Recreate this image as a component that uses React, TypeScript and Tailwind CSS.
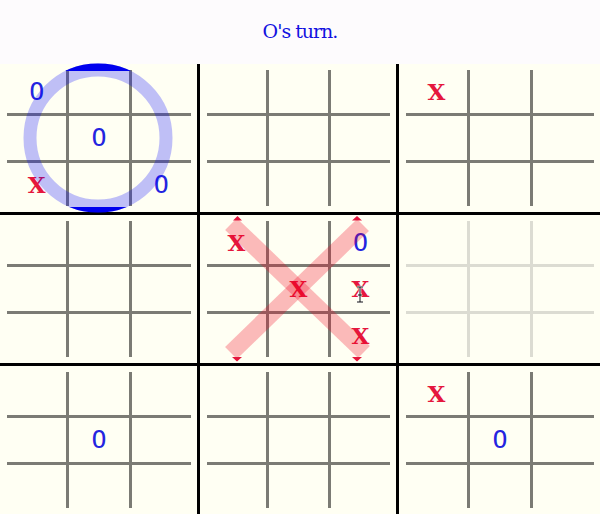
import React from 'react';

type Mark = 'X' | 'O' | '';

const boards: Mark[][] = [
  ['O', '', '', '', 'O', '', 'X', '', 'O'],
  ['', '', '', '', '', '', '', '', ''],
  ['X', '', '', '', '', '', '', '', ''],
  ['', '', '', '', '', '', '', '', ''],
  ['X', '', 'O', '', 'X', 'X', '', '', 'X'],
  ['', '', '', '', '', '', '', '', ''],
  ['', '', '', '', 'O', '', '', '', ''],
  ['', '', '', '', '', '', '', '', ''],
  ['X', '', '', '', 'O', '', '', '', ''],
];

function Cell({ mark }: { mark: Mark }) {
  return (
    <div className="bg-[#fffff3] flex items-center justify-center font-['DejaVu_Serif',serif] text-[23px] leading-none">
      {mark === 'X' && <span className="text-[#e5173d] font-bold">X</span>}
      {mark === 'O' && <span className="text-[#2424e0] [font-family:'DejaVu_Sans_Mono',monospace] text-[25px]">O</span>}
    </div>
  );
}

function CircleOverlay() {
  return (
    <svg className="absolute inset-0 pointer-events-none overflow-visible" width="197" height="148">
      <defs>
        <clipPath id="ringEdge">
          <rect x="0" y="-10" width="197" height="17" />
          <rect x="0" y="143" width="197" height="20" />
        </clipPath>
      </defs>
      <circle cx="98" cy="74" r="68" fill="none" stroke="rgba(0,0,255,0.25)" strokeWidth="13" />
      <circle cx="98" cy="74" r="68" fill="none" stroke="#0000ee" strokeWidth="13" clipPath="url(#ringEdge)" />
    </svg>
  );
}

function CrossOverlay() {
  return (
    <svg className="absolute inset-0 pointer-events-none overflow-visible" width="196" height="148">
      <line x1="31" y1="9" x2="164" y2="137" stroke="rgba(240,0,30,0.27)" strokeWidth="17" />
      <line x1="163" y1="10" x2="31" y2="138" stroke="rgba(240,0,30,0.27)" strokeWidth="17" />
      <polygon points="33,5.5 42,5.5 37.5,1" fill="#e5173d" />
      <polygon points="152,5.5 162,5.5 157,1" fill="#e5173d" />
      <polygon points="32,142 42,142 37,146.5" fill="#e5173d" />
      <polygon points="152,142 162,142 157,146.5" fill="#e5173d" />
      {/* mouse I-beam */}
      <path d="M157 72 h6 M160 72 v15 M157 87 h6 M158 80 h4" stroke="#fff" strokeWidth="2.5" fill="none" />
      <path d="M157 72 h6 M160 72 v15 M157 87 h6 M158 80 h4" stroke="#111" strokeWidth="1" fill="none" />
    </svg>
  );
}

function SubBoard({ marks, index }: { marks: Mark[]; index: number }) {
  const faded = index === 5;
  return (
    <div className="relative bg-[#fffff3] pl-[7px] pr-[6px] pt-[6px] pb-[6px]">
      <div className={`grid grid-cols-3 grid-rows-3 gap-[3px] h-full ${faded ? 'bg-[#dcdcd2]' : 'bg-[#7b7b74]'}`}>
        {marks.map((m, i) => (
          <Cell key={i} mark={m} />
        ))}
      </div>
      {index === 0 && <CircleOverlay />}
      {index === 4 && <CrossOverlay />}
    </div>
  );
}

export default function App() {
  return (
    <div className="w-[600px] h-[514px] bg-[#fdfbfd] overflow-hidden">
      <div className="h-[64px] flex items-center justify-center pb-[2px]">
        <span className="font-['DejaVu_Serif',serif] font-medium text-[19px] tracking-[-1px] text-[#1212e0]">O's turn.</span>
      </div>
      <div className="grid grid-cols-[197px_196px_201px] grid-rows-[148px_148px_148px] gap-[3px] bg-black">
        {boards.map((b, i) => (
          <SubBoard key={i} marks={b} index={i} />
        ))}
      </div>
    </div>
  );
}
